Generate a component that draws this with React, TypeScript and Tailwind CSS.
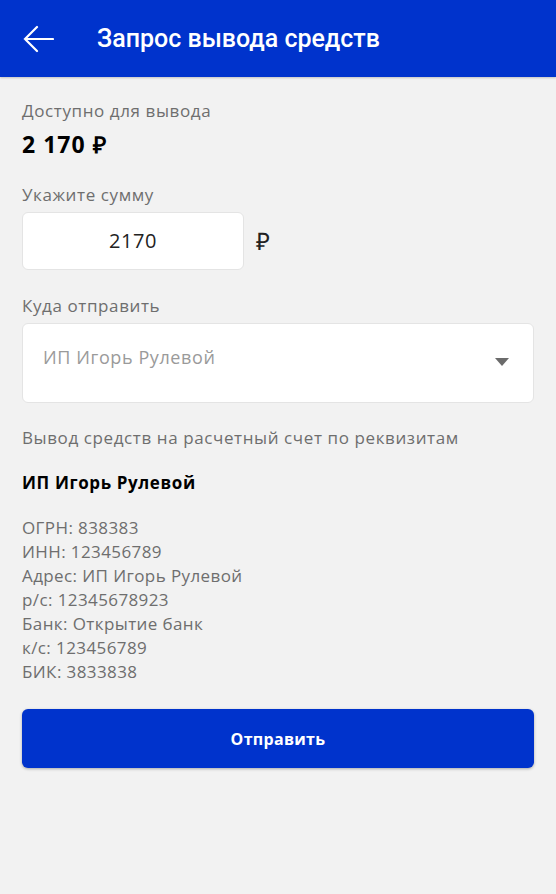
import React from "react";

const details = [
  "ОГРН: 838383",
  "ИНН: 123456789",
  "Адрес: ИП Игорь Рулевой",
  "р/с: 12345678923",
  "Банк: Открытие банк",
  "к/с: 123456789",
  "БИК: 3833838",
];

const App: React.FC = () => {
  return (
    <div className="min-h-[894px] w-[556px] bg-[#f2f2f2] font-['Open_Sans',sans-serif]">
      <header className="h-[77px] bg-[#0033cc] flex items-center px-[22px] shadow-[0_1px_2px_rgba(0,0,0,0.2)]">
        <svg width="32" height="32" viewBox="0 0 32 32" fill="none" stroke="white" strokeWidth="2.2" strokeLinecap="round">
          <path d="M3 16h28M15 4 3 16l12 12" />
        </svg>
        <h1 className="ml-[43px] text-white text-[25px] font-medium font-['Roboto',sans-serif]">Запрос вывода средств</h1>
      </header>

      <main className="px-[22px] pt-[22px] tracking-[0.6px]">
        <p className="text-[17px] text-[#6e6e6e] leading-[24px]">Доступно для вывода</p>
        <p className="mt-[8px] text-[23px] font-bold text-black leading-[26px] tracking-[1px]">2 170 ₽</p>

        <p className="mt-[26px] text-[17px] text-[#6e6e6e] leading-[24px]">Укажите сумму</p>
        <div className="mt-[5px] flex items-center gap-[12px]">
          <div className="w-[222px] h-[58px] bg-white rounded-[6px] border border-[#e4e4e4] flex items-center justify-center text-[20px] text-[#222]">
            2170
          </div>
          <span className="text-[24px] text-[#222]">₽</span>
        </div>

        <p className="mt-[24px] text-[17px] text-[#6e6e6e] leading-[24px]">Куда отправить</p>
        <div className="mt-[5px] h-[80px] bg-white rounded-[6px] border border-[#e4e4e4] flex items-start justify-between pl-[20px] pr-[24px] pt-[20px]">
          <span className="text-[18px] text-[#9a9a9a] leading-[26px]">ИП Игорь Рулевой</span>
          <svg className="mt-[14px]" width="14" height="8" viewBox="0 0 14 8" fill="#6b6b6b">
            <path d="M0 0h14L7 8z" />
          </svg>
        </div>

        <p className="mt-[23px] text-[17px] text-[#6e6e6e] leading-[24px]">Вывод средств на расчетный счет по реквизитам</p>
        <p className="mt-[21px] text-[17px] font-bold text-black leading-[24px]">ИП Игорь Рулевой</p>

        <div className="mt-[21px] text-[17px] text-[#6e6e6e] leading-[24px] tracking-[0.4px]">
          {details.map((d) => (
            <p key={d}>{d}</p>
          ))}
        </div>

        <button className="mt-[25px] w-[512px] h-[59px] bg-[#0033cc] rounded-[6px] text-white text-[16px] font-bold tracking-[0.3px] shadow-[0_1px_3px_rgba(0,0,0,0.3)]">
          Отправить
        </button>
      </main>
    </div>
  );
};

export default App;
